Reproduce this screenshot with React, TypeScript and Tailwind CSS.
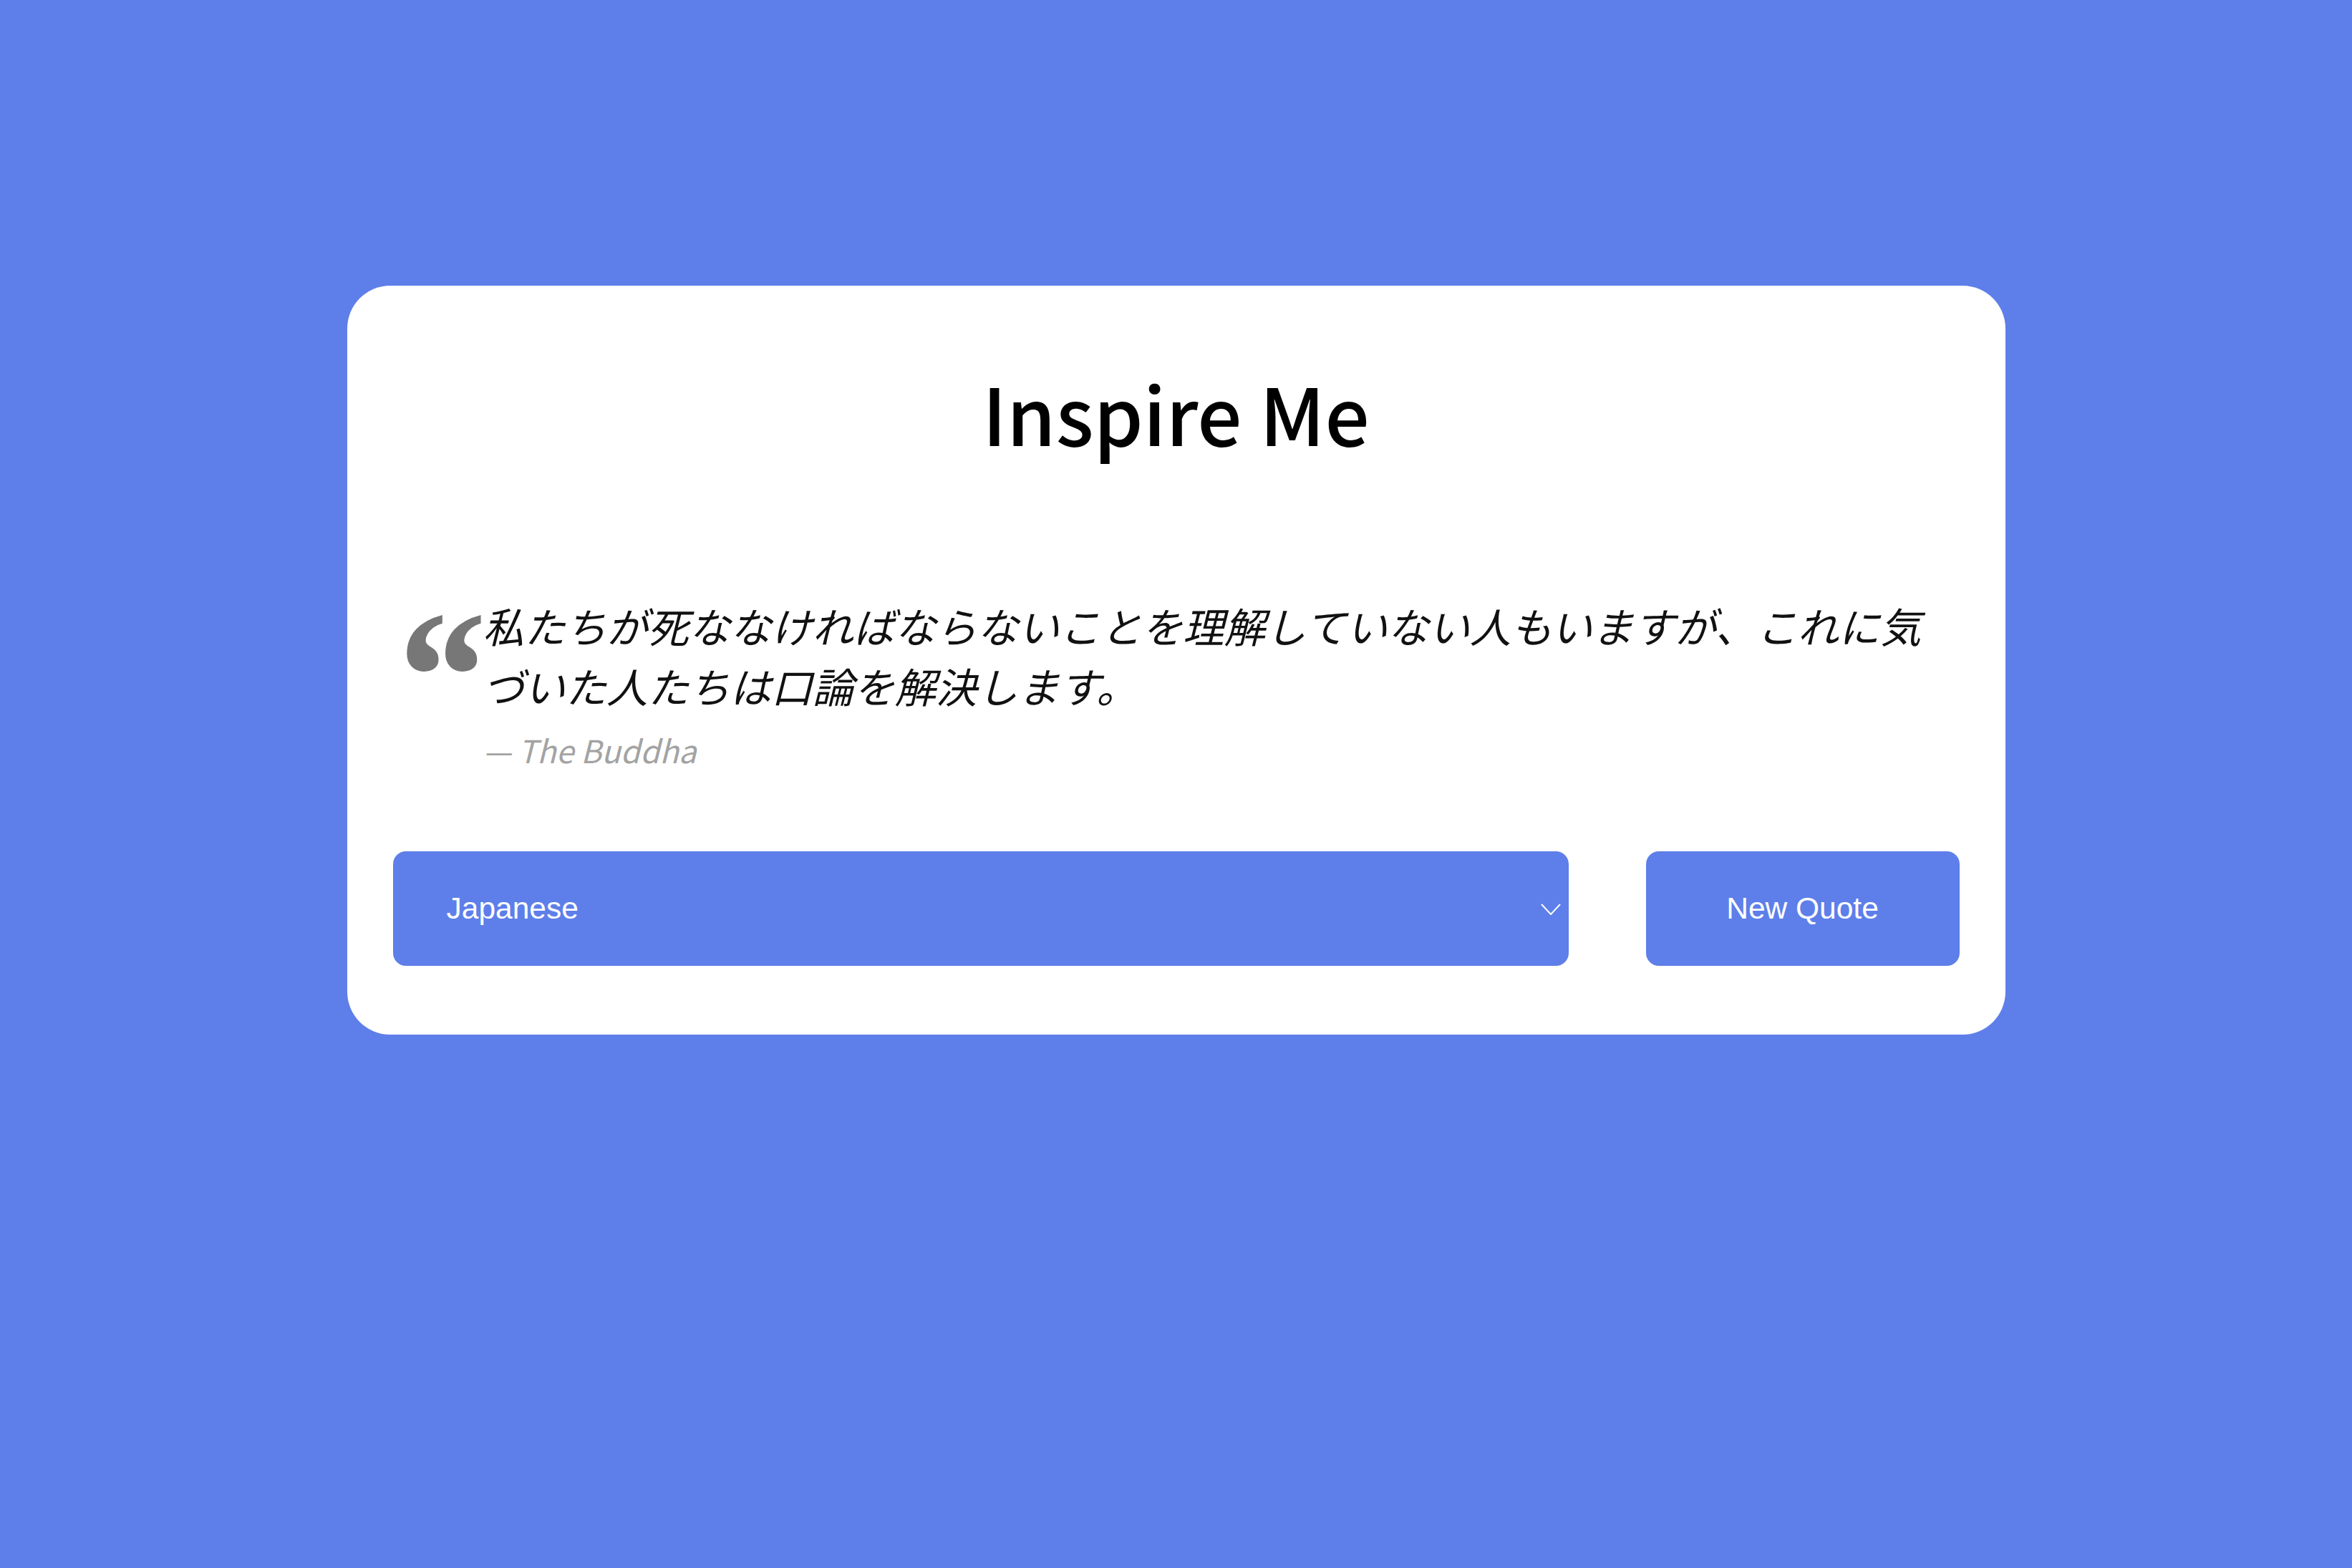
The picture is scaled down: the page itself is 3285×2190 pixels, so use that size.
import React, { useState } from 'react';

const App: React.FC = () => {
  const [lang, setLang] = useState('Japanese');

  return (
    <div className="min-h-screen w-full bg-[#5e7fe9] pt-[399px] font-['Noto_Sans_CJK_JP','Noto_Sans',sans-serif]">
      <div className="mx-auto w-[2316px] rounded-[60px] bg-white px-[64px] pt-[121px] pb-[96px]">
        {/* Title */}
        <h1 className="text-center text-[110px] leading-[110px] font-medium text-black">Inspire Me</h1>

        {/* Quote */}
        <div className="mt-[201px] flex">
          <div className="h-[84px] w-[126px] shrink-0 overflow-visible">
            <div className="-mt-[17px] -ml-[5px] font-['Liberation_Serif',serif] text-[262px] leading-none font-bold italic text-[#777777]">
              &ldquo;
            </div>
          </div>
          <div className="min-w-0 flex-1">
            <p className="text-[57.5px] leading-[84px] italic text-[#111111]">
              私たちが死ななければならないことを理解していない人もいますが、これに気づいた人たちは口論を解決します。
            </p>
            <p className="mt-[20px] text-[44px] leading-[56px] italic text-[#a3a3a3]">— The Buddha</p>
          </div>
        </div>

        {/* Controls */}
        <div className="mt-[114px] flex gap-[108px] font-['Liberation_Sans',Arial,sans-serif]">
          <div className="relative flex-1">
            <select
              value={lang}
              onChange={(e) => setLang(e.target.value)}
              className="h-[160px] w-full appearance-none rounded-[18px] bg-[#5e7fe9] pl-[75px] text-[42.5px] text-white outline-none"
            >
              <option>English</option>
              <option>Japanese</option>
              <option>Chinese</option>
            </select>
            <svg
              className="pointer-events-none absolute right-[11px] top-[73px] h-[16px] w-[28px]"
              viewBox="0 0 28 16"
              fill="none"
              stroke="white"
              strokeWidth={2}
            >
              <path d="M1 1l13 14L27 1" />
            </svg>
          </div>
          <button className="h-[160px] w-[438px] rounded-[18px] bg-[#5e7fe9] text-[42.5px] text-white">
            New Quote
          </button>
        </div>
      </div>
    </div>
  );
};

export default App;
